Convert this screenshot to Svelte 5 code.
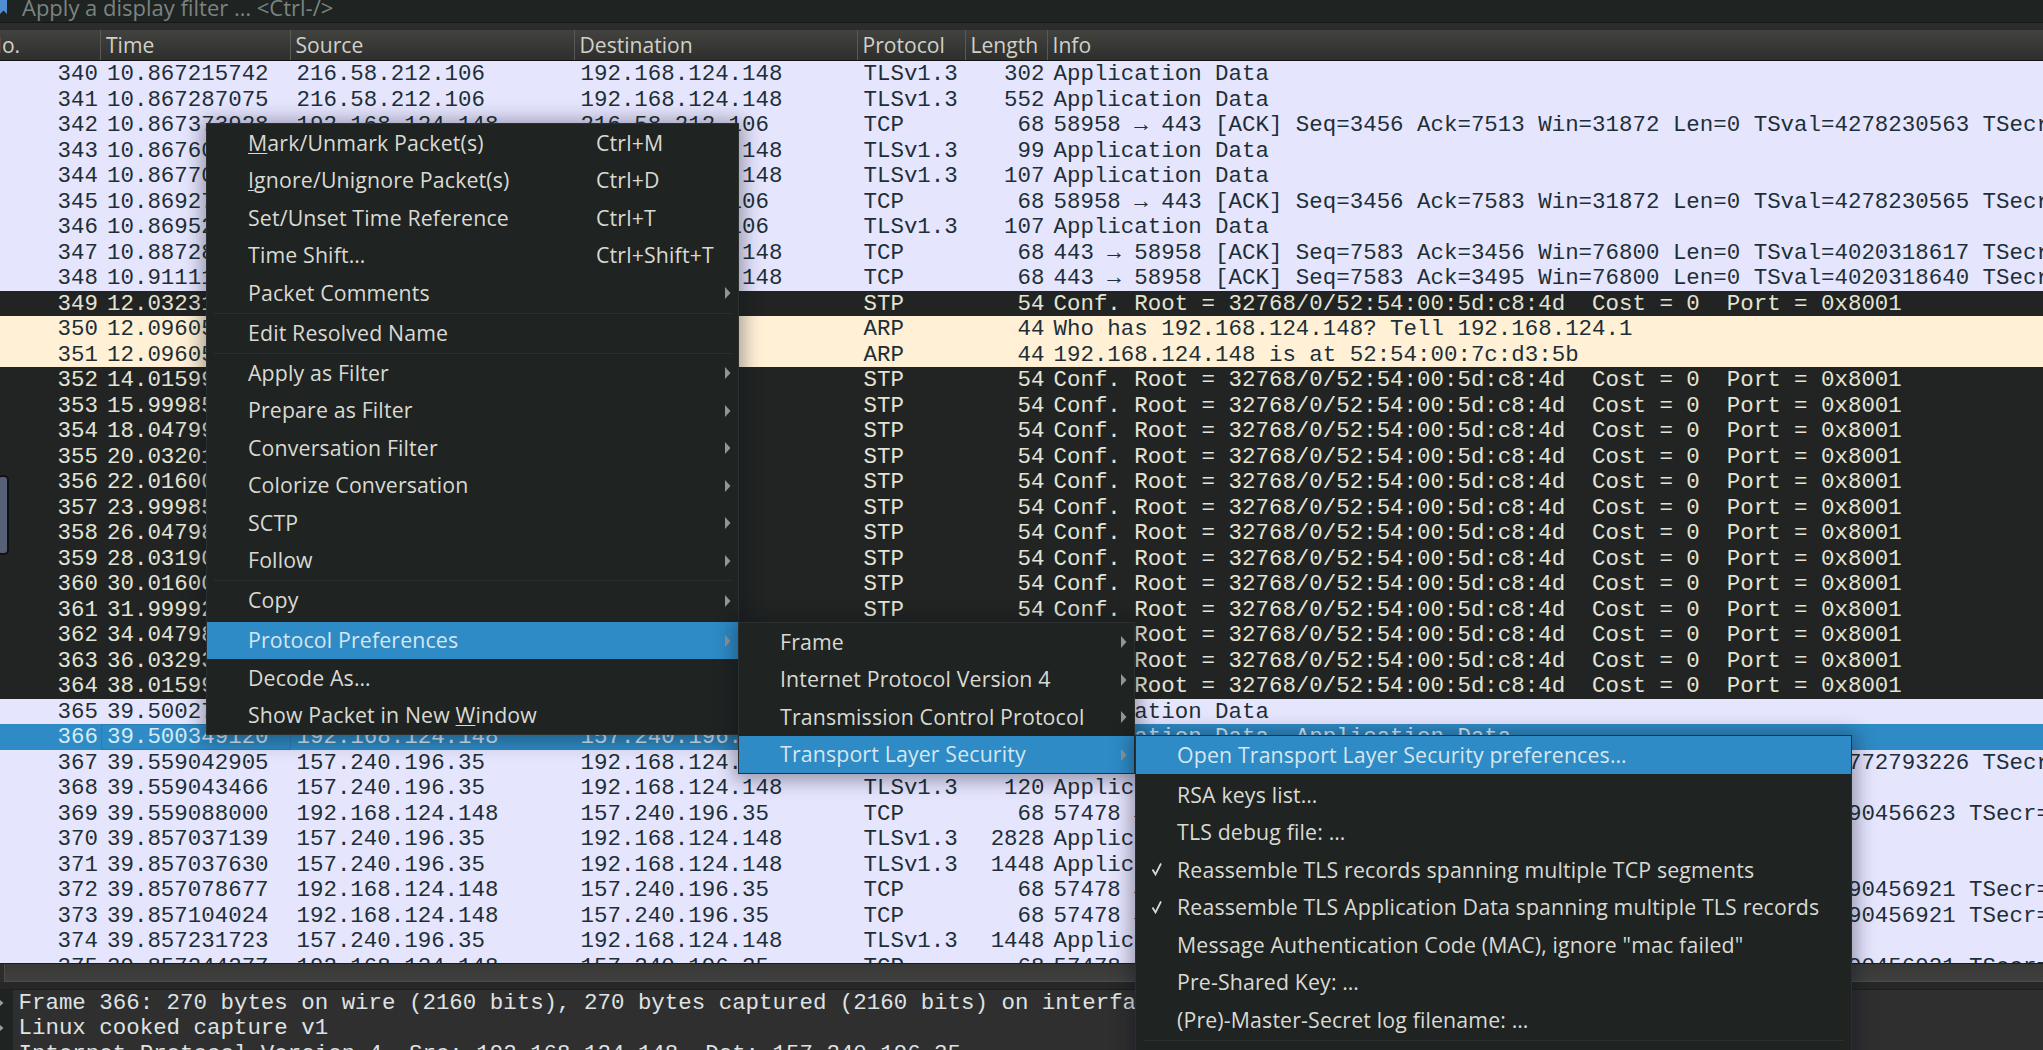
<script>
  const A = 'Application Data';
  const S1 = '216.58.212.106', C = '192.168.124.148', F = '157.240.196.35';
  const stp = 'Conf. Root = 32768/0/52:54:00:5d:c8:4d  Cost = 0  Port = 0x8001';
  const rows = [
    [340, '10.867215742', S1, C, 'TLSv1.3', 302, A],
    [341, '10.867287075', S1, C, 'TLSv1.3', 552, A],
    [342, '10.867373928', C, S1, 'TCP', 68, '58958 → 443 [ACK] Seq=3456 Ack=7513 Win=31872 Len=0 TSval=4278230563 TSecr=4020318567'],
    [343, '10.867607311', S1, C, 'TLSv1.3', 99, A],
    [344, '10.867701482', S1, C, 'TLSv1.3', 107, A],
    [345, '10.869271150', C, S1, 'TCP', 68, '58958 → 443 [ACK] Seq=3456 Ack=7583 Win=31872 Len=0 TSval=4278230565 TSecr=4020318567'],
    [346, '10.869523904', C, S1, 'TLSv1.3', 107, A],
    [347, '10.887281266', S1, C, 'TCP', 68, '443 → 58958 [ACK] Seq=7583 Ack=3456 Win=76800 Len=0 TSval=4020318617 TSecr=4278230565'],
    [348, '10.911114720', S1, C, 'TCP', 68, '443 → 58958 [ACK] Seq=7583 Ack=3495 Win=76800 Len=0 TSval=4020318640 TSecr=4278230565'],
    [349, '12.032318844', '', '', 'STP', 54, stp, 'd'],
    [350, '12.096052177', '', '', 'ARP', 44, 'Who has 192.168.124.148? Tell 192.168.124.1', 'a'],
    [351, '12.096058302', '', '', 'ARP', 44, '192.168.124.148 is at 52:54:00:7c:d3:5b', 'a'],
    [352, '14.015994120', '', '', 'STP', 54, stp, 'd'],
    [353, '15.999851377', '', '', 'STP', 54, stp, 'd'],
    [354, '18.047990215', '', '', 'STP', 54, stp, 'd'],
    [355, '20.032011764', '', '', 'STP', 54, stp, 'd'],
    [356, '22.016003581', '', '', 'STP', 54, stp, 'd'],
    [357, '23.999851902', '', '', 'STP', 54, stp, 'd'],
    [358, '26.047981440', '', '', 'STP', 54, stp, 'd'],
    [359, '28.031906615', '', '', 'STP', 54, stp, 'd'],
    [360, '30.016004233', '', '', 'STP', 54, stp, 'd'],
    [361, '31.999921078', '', '', 'STP', 54, stp, 'd'],
    [362, '34.047982650', '', '', 'STP', 54, stp, 'd'],
    [363, '36.032931147', '', '', 'STP', 54, stp, 'd'],
    [364, '38.015992806', '', '', 'STP', 54, stp, 'd'],
    [365, '39.500271934', C, F, 'TLSv1.3', 1035, A],
    [366, '39.500349120', C, F, 'TLSv1.3', 270, 'Application Data, Application Data', 's'],
    [367, '39.559042905', F, C, 'TCP', 68, '443 → 57478 [ACK] Seq=6112 Ack=2950 Win=68096 Len=0 TSval=3772793226 TSecr=2690456623'],
    [368, '39.559043466', F, C, 'TLSv1.3', 120, A],
    [369, '39.559088000', C, F, 'TCP', 68, '57478 → 443 [ACK] Seq=295 Ack=6164 Win=64128 Len=0 TSval=2690456623 TSecr=3772793226'],
    [370, '39.857037139', F, C, 'TLSv1.3', 2828, A],
    [371, '39.857037630', F, C, 'TLSv1.3', 1448, A],
    [372, '39.857078677', C, F, 'TCP', 68, '57478 → 443 [ACK] Seq=295 Ack=8924 Win=64128 Len=0 TSval=2690456921 TSecr=3772793524'],
    [373, '39.857104024', C, F, 'TCP', 68, '57478 → 443 [ACK] Seq=295 Ack=10304 Win=6412 Len=0 TSval=2690456921 TSecr=3772793524'],
    [374, '39.857231723', F, C, 'TLSv1.3', 1448, A],
    [375, '39.857244277', C, F, 'TCP', 68, '57478 → 443 [ACK] Seq=295 Ack=11684 Win=6412 Len=0 TSval=2690456921 TSecr=3772793524']
  ];
  const columns = ['No.', 'Time', 'Source', 'Destination', 'Protocol', 'Length', 'Info'];

  const main = [
    { pre: '', u: 'M', post: 'ark/Unmark Packet(s)', key: 'Ctrl+M' },
    { pre: '', u: 'I', post: 'gnore/Unignore Packet(s)', key: 'Ctrl+D' },
    { post: 'Set/Unset Time Reference', key: 'Ctrl+T' },
    { post: 'Time Shift…', key: 'Ctrl+Shift+T' },
    { post: 'Packet Comments', sub: true },
    { sep: true },
    { post: 'Edit Resolved Name' },
    { sep: true },
    { post: 'Apply as Filter', sub: true },
    { post: 'Prepare as Filter', sub: true },
    { post: 'Conversation Filter', sub: true },
    { post: 'Colorize Conversation', sub: true },
    { post: 'SCTP', sub: true },
    { post: 'Follow', sub: true },
    { sep: true },
    { post: 'Copy', sub: true },
    { sep: true, plain: true },
    { post: 'Protocol Preferences', sub: true, on: true },
    { post: 'Decode As…' },
    { pre: 'Show Packet in New ', u: 'W', post: 'indow' }
  ];
  const second = [
    { post: 'Frame', sub: true },
    { post: 'Internet Protocol Version 4', sub: true },
    { post: 'Transmission Control Protocol', sub: true },
    { post: 'Transport Layer Security', sub: true, on: true }
  ];
  const third = [
    { post: 'Open Transport Layer Security preferences…', on: true },
    { sep: true, plain: true },
    { post: 'RSA keys list…' },
    { post: 'TLS debug file: …' },
    { post: 'Reassemble TLS records spanning multiple TCP segments', check: true },
    { post: 'Reassemble TLS Application Data spanning multiple TLS records', check: true },
    { post: 'Message Authentication Code (MAC), ignore "mac failed"' },
    { post: 'Pre-Shared Key: …' },
    { post: '(Pre)-Master-Secret log filename: …' },
    { sep: true },
    { post: 'Disable TLS' }
  ];
  const menus = [
    { cls: 'm1', items: main },
    { cls: 'm2', items: second },
    { cls: 'm3', items: third }
  ];
</script>

<div class="app">
  <div class="filter">
    <svg class="bookmark" viewBox="0 0 8 15" width="8" height="15"><path d="M0 0H7V14L3.5 10.5L0 14Z" fill="#4f8fd0"/></svg>
    <span class="filter-text">Apply a display filter … &lt;Ctrl-/&gt;</span>
  </div>
  <div class="strip"></div>
  <div class="header">
    {#each columns as c, i}
      <div class="hcell h{i}">{c}</div>
    {/each}
  </div>
  <div class="list">
    {#each rows as r}
      <div class="row {r[7] ?? 't'}">
        <span class="cell no">{r[0]}</span>
        <span class="cell time">{r[1]}</span>
        <span class="cell src">{r[2]}</span>
        <span class="cell dst">{r[3]}</span>
        <span class="cell proto">{r[4]}</span>
        <span class="cell len">{r[5]}</span>
        <span class="cell info">{r[6]}</span>
      </div>
    {/each}
  </div>
  <div class="hscroll"><div class="trough"></div></div>
  <div class="gap"></div>
  <div class="details">
    <div class="gutter">
      <svg viewBox="0 0 5 8" width="5" height="8"><path d="M0 1L3.5 4L0 7Z" fill="#9a9e9c"/></svg>
      <svg viewBox="0 0 5 8" width="5" height="8"><path d="M0 1L3.5 4L0 7Z" fill="#9a9e9c"/></svg>
      <svg viewBox="0 0 5 8" width="5" height="8"><path d="M0 1L3.5 4L0 7Z" fill="#9a9e9c"/></svg>
    </div>
    <div class="tree">
      <div class="line">Frame 366: 270 bytes on wire (2160 bits), 270 bytes captured (2160 bits) on interface any, id 0</div>
      <div class="line">Linux cooked capture v1</div>
      <div class="line">Internet Protocol Version 4, Src: 192.168.124.148, Dst: 157.240.196.35</div>
    </div>
  </div>

  <div class="side-grip"></div>

  {#each menus as m}
    <div class="menu {m.cls}">
      {#each m.items as it}
        {#if it.sep}
          <div class="sep" class:plain={it.plain}></div>
        {:else}
          <div class="item" class:on={it.on}>
            {#if it.check}
              <svg class="check" viewBox="0 0 12 16" width="12" height="16"><path d="M1.5 8.5L4.5 13.5L10 2.5" fill="none" stroke="#d8d9d2" stroke-width="1.8"/></svg>
            {/if}
            <span class="label">{it.pre ?? ''}{#if it.u}<u>{it.u}</u>{/if}{it.post}</span>
            {#if it.key}<span class="key">{it.key}</span>{/if}
            {#if it.sub}
              <svg class="arrow" viewBox="0 0 6 14" width="6" height="14"><path d="M0 1L5.5 7L0 13Z" fill="#8f9794"/></svg>
            {/if}
          </div>
        {/if}
      {/each}
    </div>
  {/each}
</div>

<style>
  :global(body) { margin: 0; background: #1f2321; }
  .app {
    position: relative;
    width: 2043px;
    height: 1050px;
    overflow: hidden;
    display: flex;
    flex-direction: column;
    font-family: "Open Sans", "Noto Sans", sans-serif;
  }
  .filter {
    height: 22px;
    flex: none;
    background: #1f2321;
    display: flex;
    overflow: hidden;
    position: relative;
  }
  .bookmark { flex: none; }
  .filter-text {
    margin-left: 14px;
    margin-top: -7px;
    font-size: 22px;
    line-height: 28px;
    color: #7b8480;
    white-space: nowrap;
  }
  .strip {
    height: 8px;
    flex: none;
    background: #2b2c2b;
    border-top: 1px solid #151716;
    box-sizing: border-box;
  }
  .header {
    height: 31px;
    flex: none;
    display: flex;
    background: linear-gradient(#42433f, #2e2f2d);
    border-bottom: 1px solid #111312;
    box-sizing: border-box;
    overflow: hidden;
  }
  .hcell {
    box-sizing: border-box;
    flex: none;
    border-right: 1px solid #585a56;
    color: #cfd0c8;
    font-size: 21.1px;
    line-height: 30px;
    padding-left: 5px;
    white-space: nowrap;
  }
  .h0 { width: 101px; padding-left: 0; text-indent: -14px; overflow: hidden; }
  .h1 { width: 189.5px; }
  .h2 { width: 284px; }
  .h3 { width: 283px; }
  .h4 { width: 108px; }
  .h5 { width: 82px; }
  .h6 { flex: 1; border-right: 0; }

  .list {
    height: 902px;
    flex: none;
    overflow: hidden;
    font-family: "Liberation Mono", monospace;
    font-size: 22.45px;
  }
  .row {
    display: flex;
    height: 25.5px;
    line-height: 26.5px;
    white-space: pre;
  }
  .row.t { background: #e6e5fe; color: #1d2f36; }
  .row.d { background: #212422; color: #e4e4d6; }
  .row.a { background: #fff0d6; color: #1d2f36; }
  .row.s { background: #2e8bc5; color: #d7eaf5; }
  .cell { box-sizing: border-box; flex: none; overflow: hidden; padding-left: 6px; }
  .no { width: 101px; text-align: right; padding: 0 3px 0 0; }
  .time { width: 189.5px; }
  .src { width: 284px; }
  .dst { width: 283px; }
  .proto { width: 108px; }
  .len { width: 82px; text-align: right; padding: 0 3px 0 0; }
  .info { flex: 1; min-width: 0; }
  .row.s .time { box-shadow: inset 0 0 0 1px #2a7cb2; }

  .hscroll {
    height: 19px;
    flex: none;
    background: #2b2c2b;
    border-top: 1px solid #1b1c1b;
    box-sizing: border-box;
    padding-left: 4px;
    display: flex;
  }
  .trough {
    flex: 1;
    background: linear-gradient(#383937, #40413f);
    border-bottom: 1px solid #4c4d4a;
    border-left: 1px solid #4c4d4a;
  }
  .gap {
    height: 8px;
    flex: none;
    background: #262726;
    border-bottom: 1px solid #1d1e1d;
    box-sizing: border-box;
  }
  .details {
    flex: 1;
    min-height: 0;
    display: flex;
    background: #2f2f2f;
    font-family: "Liberation Mono", monospace;
    font-size: 22.45px;
    line-height: 25.5px;
    color: #dfe2e3;
    overflow: hidden;
  }
  .gutter {
    width: 13px;
    flex: none;
    background: #1f2321;
    display: flex;
    flex-direction: column;
    align-items: flex-start;
    gap: 17.5px;
    padding-top: 8.5px;
    box-sizing: border-box;
  }
  .gutter svg { flex: none; }
  .tree { padding-left: 5.5px; padding-top: 0.5px; }
  .line { white-space: pre; }

  .side-grip {
    position: absolute;
    left: -3px;
    top: 475px;
    width: 8px;
    height: 76px;
    background: #566178;
    border: 2px solid #101211;
    border-radius: 5px;
  }

  .menu {
    position: absolute;
    box-sizing: border-box;
    background: #1f2321;
    border: 1px solid #2b2f2d;
    box-shadow: 0 2px 18px 4px rgba(10, 12, 30, .38);
    color: #d9dad3;
    font-size: 21.3px;
    letter-spacing: .15px;
  }
  .m1 { left: 206px; top: 123.25px; width: 533px; }
  .m2 { left: 738px; top: 622.25px; width: 397px; }
  .m3 { left: 1135px; top: 735.25px; width: 717px; }
  .item {
    position: relative;
    height: 37.5px;
    display: flex;
    align-items: center;
    padding-left: 41px;
    white-space: nowrap;
  }
  .item.on { background: #2e8bc5; color: #d5e6f0; }
  .label { flex: none; margin-top: -2px; }
  .key { position: absolute; left: 389px; margin-top: -2px; }
  .arrow { position: absolute; right: 7px; top: 12px; }
  .check { position: absolute; left: 15px; top: 10px; }
  .sep {
    height: 1px;
    margin: 0.75px 7px;
    background: #2b2f2d;
  }
  .sep.plain { background: transparent; }
  u { text-underline-offset: 2px; text-decoration-thickness: 1px; }
</style>
